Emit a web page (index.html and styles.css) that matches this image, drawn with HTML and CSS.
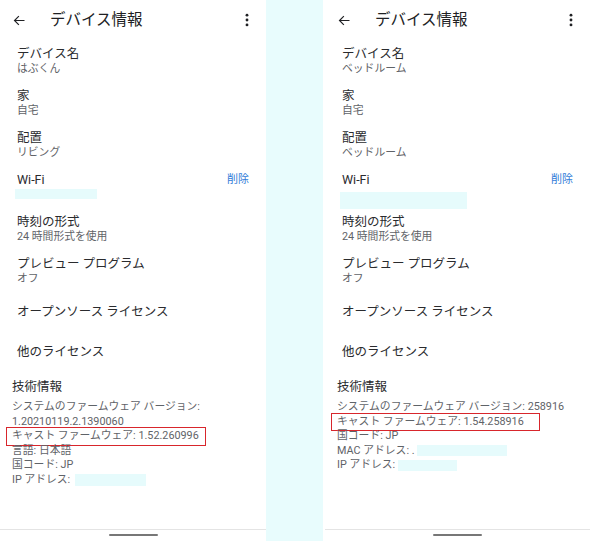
FILE: index.html
```html
<!DOCTYPE html>
<html lang="ja">
<head>
    <meta charset="UTF-8">
    <meta name="viewport" content="width=device-width, initial-scale=1.0">
    <title>デバイス情報</title>
    <link rel="stylesheet" href="styles.css">
</head>
<body>
    <div class="screen">
        <!-- 左: はぶくん -->
        <section class="panel">
            <header class="appbar">
                <svg class="back" viewBox="0 0 24 24"><path d="M20 12H4.5M11 5l-7 7 7 7"/></svg>
                <h1 class="appbar-title">デバイス情報</h1>
                <svg class="more" viewBox="0 0 24 24"><circle cx="12" cy="5.5" r="1.9"/><circle cx="12" cy="12" r="1.9"/><circle cx="12" cy="18.5" r="1.9"/></svg>
            </header>
            <div class="pref">
                <div class="pref-title">デバイス名</div>
                <div class="pref-summary">はぶくん</div>
            </div>
            <div class="pref">
                <div class="pref-title">家</div>
                <div class="pref-summary">自宅</div>
            </div>
            <div class="pref">
                <div class="pref-title">配置</div>
                <div class="pref-summary">リビング</div>
            </div>
            <div class="pref">
                <div class="pref-title pref-row">Wi-Fi<span class="pref-action">削除</span></div>
                <div class="pref-summary"><span class="blank blank-wifi"></span></div>
            </div>
            <div class="pref">
                <div class="pref-title">時刻の形式</div>
                <div class="pref-summary">24 時間形式を使用</div>
            </div>
            <div class="pref">
                <div class="pref-title">プレビュー プログラム</div>
                <div class="pref-summary">オフ</div>
            </div>
            <div class="pref pref-single">オープンソース ライセンス</div>
            <div class="pref pref-single">他のライセンス</div>
            <div class="tech">
                <div class="tech-title">技術情報</div>
                <div class="tech-line">システムのファームウェア バージョン:</div>
                <div class="tech-line">1.20210119.2.1390060</div>
                <div class="tech-line"><span class="mark">キャスト ファームウェア: 1.52.260996</span></div>
                <div class="tech-line">言語: 日本語</div>
                <div class="tech-line">国コード: JP</div>
                <div class="tech-line">IP アドレス: <span class="blank blank-ip"></span></div>
            </div>
            <footer class="navbar"><span class="handle"></span></footer>
        </section>

        <div class="gap"></div>

        <!-- 右: ベッドルーム -->
        <section class="panel panel-b">
            <header class="appbar">
                <svg class="back" viewBox="0 0 24 24"><path d="M20 12H4.5M11 5l-7 7 7 7"/></svg>
                <h1 class="appbar-title">デバイス情報</h1>
                <svg class="more" viewBox="0 0 24 24"><circle cx="12" cy="5.5" r="1.9"/><circle cx="12" cy="12" r="1.9"/><circle cx="12" cy="18.5" r="1.9"/></svg>
            </header>
            <div class="pref">
                <div class="pref-title">デバイス名</div>
                <div class="pref-summary">ベッドルーム</div>
            </div>
            <div class="pref">
                <div class="pref-title">家</div>
                <div class="pref-summary">自宅</div>
            </div>
            <div class="pref">
                <div class="pref-title">配置</div>
                <div class="pref-summary">ベッドルーム</div>
            </div>
            <div class="pref">
                <div class="pref-title pref-row">Wi-Fi<span class="pref-action">削除</span></div>
                <div class="pref-summary"><span class="blank blank-wifi-wide"></span></div>
            </div>
            <div class="pref">
                <div class="pref-title">時刻の形式</div>
                <div class="pref-summary">24 時間形式を使用</div>
            </div>
            <div class="pref">
                <div class="pref-title">プレビュー プログラム</div>
                <div class="pref-summary">オフ</div>
            </div>
            <div class="pref pref-single">オープンソース ライセンス</div>
            <div class="pref pref-single">他のライセンス</div>
            <div class="tech">
                <div class="tech-title">技術情報</div>
                <div class="tech-line">システムのファームウェア バージョン: 258916</div>
                <div class="tech-line"><span class="mark mark-wide">キャスト ファームウェア: 1.54.258916</span></div>
                <div class="tech-line">国コード: JP</div>
                <div class="tech-line">MAC アドレス: . <span class="blank blank-mac"></span></div>
                <div class="tech-line">IP アドレス:<span class="blank blank-ip-b"></span></div>
            </div>
            <footer class="navbar"><span class="handle"></span></footer>
        </section>
    </div>
</body>
</html>
```

FILE: styles.css
```css
body {
    margin: 0;
    padding: 0;
    font-family: Roboto, 'Noto Sans CJK JP', sans-serif;
    color: #202124;
    background: #ffffff;
}
.screen {
    display: flex;
    width: 590px;
    height: 541px;
    overflow: hidden;
}
.panel {
    width: 266px;
    height: 541px;
    display: flex;
    flex-direction: column;
    background: #ffffff;
}
.panel-b {
    width: 267px;
    padding-left: 2px;
    box-sizing: border-box;
}
.gap {
    width: 57px;
    background: #e8fcfd;
}

/* верхняя панель */
.appbar {
    display: flex;
    align-items: center;
    height: 40px;
    padding: 0 10px 0 12px;
}
.back {
    width: 15px;
    height: 15px;
    fill: none;
    stroke: #202124;
    stroke-width: 1.9;
}
.appbar-title {
    flex: 1;
    margin: 0 0 0 23px;
    font-size: 15.5px;
    font-weight: 400;
    line-height: 20px;
}
.more {
    width: 18px;
    height: 18px;
    fill: #202124;
}

/* строки настроек */
.pref {
    padding: 6px 17px 6px 17px;
}
.pref-title {
    font-size: 12.5px;
    line-height: 16px;
    color: #2a2b2e;
}
.pref-row {
    display: flex;
    justify-content: space-between;
    align-items: center;
}
.pref-action {
    font-size: 11px;
    color: #2f7bd8;
}
.pref-summary {
    height: 14px;
    font-size: 10.8px;
    line-height: 14px;
    color: #5f6368;
}
.pref-single {
    padding: 12px 17px;
    font-size: 12.5px;
    line-height: 16px;
    color: #2a2b2e;
}

/* закрашенные поля */
.blank {
    display: inline-block;
    background: #e6fbfc;
    vertical-align: middle;
}
.blank-wifi {
    width: 82px;
    height: 10px;
    margin: -2px 0 0 -2px;
}
.blank-wifi-wide {
    width: 127px;
    height: 17px;
    margin: 4px 0 0 -2px;
}
.blank-ip {
    width: 71px;
    height: 12px;
    margin-left: 2px;
}
.blank-mac {
    width: 90px;
    height: 11px;
}
.blank-ip-b {
    width: 59px;
    height: 11px;
    margin-left: 3px;
}

/* техническая информация */
.tech {
    flex: 1;
    padding: 7px 0 0 12px;
}
.tech-title {
    font-size: 12.5px;
    line-height: 16px;
    margin-bottom: 5px;
    color: #2a2b2e;
}
.tech-line {
    font-size: 10.8px;
    line-height: 14.6px;
    color: #5f6368;
    white-space: nowrap;
}
.mark {
    display: inline-block;
    margin-left: -4px;
    padding: 0 5px 0 4px;
    outline: 1.5px solid #d8262c;
    outline-offset: 1px;
}
.mark-wide {
    padding-right: 14px;
}

/* нижняя полоса навигации */
.navbar {
    height: 11px;
    border-top: 1px solid #e4e4e4;
    display: flex;
    justify-content: center;
}
.handle {
    width: 49px;
    height: 2px;
    margin-top: 4px;
    background: #777777;
    border-radius: 1px;
}
```
